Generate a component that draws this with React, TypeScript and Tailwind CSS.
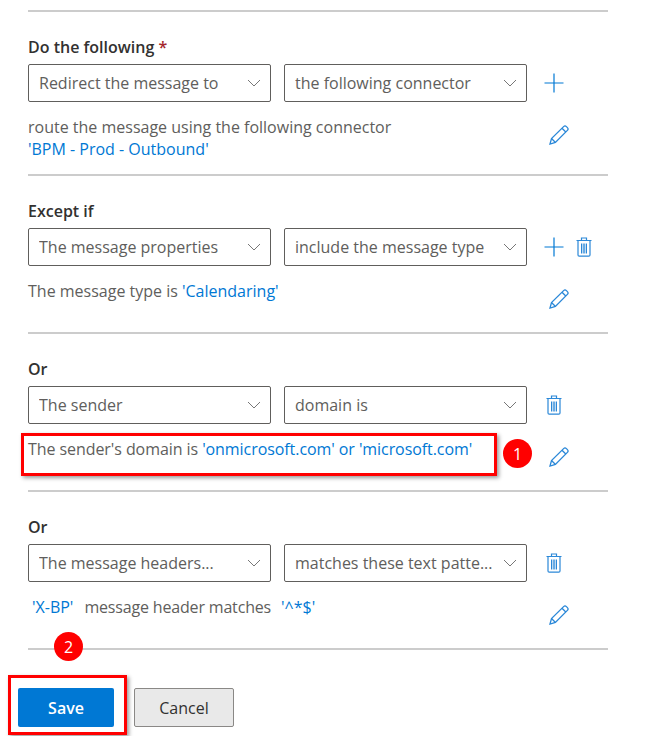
import React from 'react'

function Chevron() {
  return (
    <svg width="14" height="8" viewBox="0 0 14 8" fill="none" className="shrink-0">
      <path d="M1 1l6 6 6-6" stroke="#777" strokeWidth="1" />
    </svg>
  )
}

function Plus() {
  return (
    <svg width="20" height="20" viewBox="0 0 20 20" fill="none">
      <path d="M10 0.5v19M0.5 10h19" stroke="#0078d4" strokeWidth="1.2" />
    </svg>
  )
}

function Trash() {
  return (
    <svg width="16" height="20" viewBox="0 0 16 20" fill="none" stroke="#2b88d8" strokeWidth="1.2">
      <path d="M0.5 3.5h15M5.5 3.5v-2.5h5v2.5M2 3.5v14.5a1.2 1.2 0 0 0 1.2 1.2h9.6a1.2 1.2 0 0 0 1.2-1.2v-14.5" />
      <path d="M5.5 6.5v10M7.2 6.5v10M8.8 6.5v10M10.5 6.5v10" strokeWidth="1" />
    </svg>
  )
}

function Pencil() {
  return (
    <svg width="20" height="20" viewBox="0 0 20 20" fill="none" stroke="#2b88d8" strokeWidth="1.3">
      <path d="M1 19l1.5-5.5L14.6 1.6a2 2 0 0 1 2.8 0l1 1a2 2 0 0 1 0 2.8L6.4 17.4z" />
      <path d="M2.5 13.5l4 4M13 3.2l3.8 3.8" />
    </svg>
  )
}

function Select({ value }: { value: string }) {
  return (
    <div className="flex h-[38px] w-[243px] items-center justify-between rounded-[2px] border border-[#605e5c] bg-white pl-[10px] pr-[9px]">
      <span className="truncate text-[#605e5c]">{value}</span>
      <Chevron />
    </div>
  )
}

type SectionProps = {
  label: string
  required?: boolean
  left: string
  right: string
  plus?: boolean
  trash?: boolean
  children: React.ReactNode
}

function Section({ label, required, left, right, plus, trash, children }: SectionProps) {
  return (
    <section className="border-b-2 border-[#cccccc] pb-[14px] pt-[24px]">
      <div className="mb-[6px] h-[22px] font-semibold leading-[22px] text-[#323130]">
        {label}
        {required && <span className="text-[#a4262c]"> *</span>}
      </div>
      <div className="flex items-center">
        <Select value={left} />
        <div className="ml-[13px]">
          <Select value={right} />
        </div>
        <div className={plus ? 'ml-[17px] flex items-center gap-[12px]' : 'ml-[19px] flex items-center'}>
          {plus && <Plus />}
          {trash && <Trash />}
        </div>
      </div>
      <div className="mt-[14px] flex items-start justify-between">
        <div className="min-h-[38px] leading-[22px] text-[#605e5c]">{children}</div>
        <div className="mr-[39px] mt-[9px]">
          <Pencil />
        </div>
      </div>
    </section>
  )
}

const link = 'text-[#0078d4]'

export default function App() {
  return (
    <div className="relative h-[736px] w-[664px] overflow-hidden bg-white font-['Open_Sans',sans-serif] text-[16px]">
      <div className="ml-[28px] w-[580px] pt-[10px]">
        <div className="border-t-2 border-[#cccccc]" />
        <Section label="Do the following" required left="Redirect the message to" right="the following connector" plus>
          route the message using the following connector
          <br />
          <span className={link}>'BPM - Prod - Outbound'</span>
        </Section>
        <Section label="Except if" left="The message properties" right="include the message type" plus trash>
          The message type is <span className={link}>'Calendaring'</span>
        </Section>
        <Section label="Or" left="The sender" right="domain is" trash>
          <span className="tracking-[-0.07px]">
            The sender's domain is <span className={link}>'onmicrosoft.com' or 'microsoft.com'</span>
          </span>
        </Section>
        <Section label="Or" left="The message headers..." right="matches these text patte..." trash>
          <span className="ml-[4px]">
            <span className={link}>'X-BP'</span>
            <span className="ml-[11px] tracking-[-0.17px]">message header matches</span>
            <span className={`${link} ml-[10px]`}>'^*$'</span>
          </span>
        </Section>
        <div className="-ml-[10px] mt-[38px] flex gap-[20px]">
          <button className="h-[39px] w-[96px] rounded-[2px] bg-[#0078d4] font-semibold text-white">Save</button>
          <button className="h-[39px] w-[100px] rounded-[2px] border border-[#8a8886] bg-[#e9e9e9] font-medium text-[#323130]">Cancel</button>
        </div>
      </div>

      <div className="absolute left-[21px] top-[433px] h-[43px] w-[476px] border-[3px] border-[#ff0000] shadow-[2px_2px_4px_rgba(0,0,0,0.4)]" />
      <div className="absolute left-[503px] top-[439px] flex h-[29px] w-[29px] items-center justify-center rounded-full bg-[#ff0000] text-white">1</div>
      <div className="absolute left-[8px] top-[675px] h-[60px] w-[119px] border-[3px] border-[#ff0000] shadow-[2px_2px_4px_rgba(0,0,0,0.4)]" />
      <div className="absolute left-[54px] top-[632px] flex h-[29px] w-[29px] items-center justify-center rounded-full bg-[#ff0000] text-white">2</div>
    </div>
  )
}
